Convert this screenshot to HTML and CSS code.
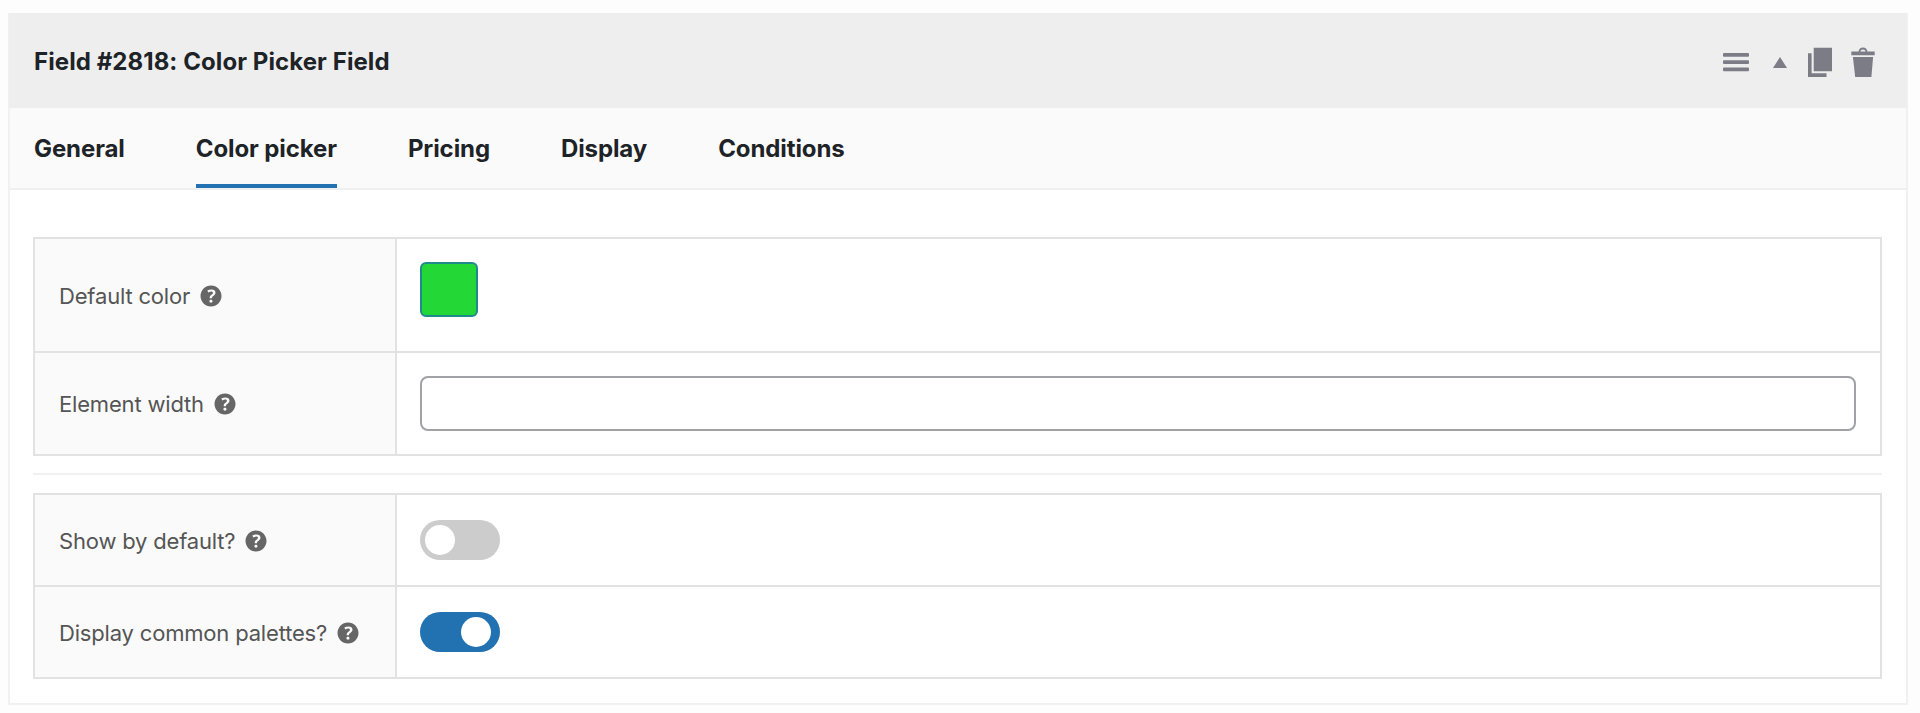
FILE: index.html
```html
<!DOCTYPE html>
<html lang="en">
<head>
    <meta charset="UTF-8">
    <title>Color Picker Field</title>
    <link rel="stylesheet" href="styles.css">
</head>
<body>

<!-- help icon, used next to every label -->
<svg class="symbols">
    <symbol id="help" viewBox="2 2 16 16">
        <path d="M17 10c0-3.870-3.140-7-7-7-3.870 0-7 3.130-7 7s3.130 7 7 7c3.860 0 7-3.130 7-7zM10.700 11.480h-1.560v-0.430c0-0.380 0.080-0.700 0.240-0.980s0.460-0.570 0.880-0.890c0.410-0.290 0.680-0.530 0.810-0.710 0.140-0.180 0.200-0.390 0.200-0.620 0-0.250-0.090-0.440-0.280-0.580-0.190-0.130-0.450-0.190-0.790-0.190-0.580 0-1.250 0.190-2 0.570l-0.640-1.280c0.870-0.490 1.800-0.740 2.770-0.740 0.810 0 1.450 0.200 1.920 0.580 0.480 0.390 0.710 0.910 0.710 1.550 0 0.430-0.090 0.800-0.290 1.110-0.190 0.320-0.570 0.670-1.110 1.060-0.380 0.280-0.610 0.490-0.710 0.630-0.100 0.150-0.150 0.340-0.150 0.570v0.350zM9.230 14.220c-0.180-0.170-0.270-0.420-0.270-0.730 0-0.330 0.080-0.580 0.260-0.750s0.430-0.250 0.770-0.250c0.320 0 0.570 0.090 0.750 0.260s0.270 0.420 0.270 0.740c0 0.300-0.090 0.550-0.270 0.720-0.180 0.180-0.430 0.270-0.750 0.270-0.330 0-0.580-0.090-0.760-0.260z"/>
    </symbol>
</svg>

<div class="field">
    <div class="field-header">
        <h2>Field #2818: Color Picker Field</h2>
        <div class="actions">
            <svg class="icon-menu" width="26" height="30" viewBox="0 0 26 30">
                <rect x="0" y="6" width="26" height="3.800" rx="1"/>
                <rect x="0" y="13.200" width="26" height="3.800" rx="1"/>
                <rect x="0" y="20.500" width="26" height="3.800" rx="1"/>
            </svg>
            <svg class="icon-toggle" width="14" height="30" viewBox="0 0 14 30">
                <path d="M7 10L14 21H0z"/>
            </svg>
            <svg class="icon-copy" width="24" height="30" viewBox="0 0 24 30">
                <path d="M5.700 0.800H24V24.300H5.700zM0 6.300H3.600V26.200H18.500V30H0z"/>
            </svg>
            <svg class="icon-trash" width="24" height="30" viewBox="0 0 24 30">
                <path d="M0.300 4.600h7.200C8 2 9.600 0.600 12 0.600s4 1.400 4.500 4h7.200V8.300H0.300zM9.300 4.600h5.400C14.300 3.200 13.400 2.500 12 2.500s-2.300 0.700-2.700 2.100z" fill-rule="evenodd"/>
                <path d="M1.900 10h20.200L20.400 30H4.200z"/>
            </svg>
        </div>
    </div>

    <div class="tabs">
        <a class="tab">General</a>
        <a class="tab active">Color picker</a>
        <a class="tab">Pricing</a>
        <a class="tab">Display</a>
        <a class="tab">Conditions</a>
    </div>

    <div class="content">
        <div class="table">
            <div class="row row-color">
                <div class="label">Default color <svg class="help"><use href="#help"/></svg></div>
                <div class="value"><div class="swatch"></div></div>
            </div>
            <div class="row row-width">
                <div class="label">Element width <svg class="help"><use href="#help"/></svg></div>
                <div class="value"><input type="text" class="text-input"></div>
            </div>
        </div>

        <hr class="separator">

        <div class="table">
            <div class="row row-switch">
                <div class="label">Show by default? <svg class="help"><use href="#help"/></svg></div>
                <div class="value"><div class="switch"><span class="knob"></span></div></div>
            </div>
            <div class="row row-switch">
                <div class="label">Display common palettes? <svg class="help"><use href="#help"/></svg></div>
                <div class="value"><div class="switch on"><span class="knob"></span></div></div>
            </div>
        </div>
    </div>
</div>

</body>
</html>
```
FILE: styles.css
```css
* {
    box-sizing: border-box;
}
body {
    margin: 0;
    padding: 13px 12px 8px 8px;
    background-color: #fdfdfd;
    font-family: Inter, "Liberation Sans", sans-serif;
    color: #1d2327;
}
.symbols {
    display: none;
}
.field {
    height: 692px;
    border: 2px solid #f1f1f1;
    border-top: none;
    background-color: #fff;
}
.field-header {
    display: flex;
    align-items: center;
    justify-content: space-between;
    height: 95px;
    margin: 0 -1px;
    padding: 0 32px 0 25px;
    background-color: #eee;
}
h2 {
    margin: 0;
    padding-top: 2px;
    font-size: 24px;
    font-weight: 700;
    line-height: 30px;
    letter-spacing: 0.08px;
}
.actions {
    display: flex;
    align-items: center;
    padding-top: 3px;
    fill: #7b7c86;
}
.icon-toggle {
    margin: 0 21px 0 24px;
}
.icon-copy {
    margin-right: 19px;
}
.tabs {
    display: flex;
    gap: 71px;
    height: 82px;
    padding-left: 24px;
    border-bottom: 2px solid #f0f0f0;
    background-color: #fafafa;
}
.tab {
    padding-top: 26px;
    font-size: 24px;
    font-weight: 700;
    line-height: 30px;
    letter-spacing: -0.1px;
}
.active {
    border-bottom: 4px solid #2271b1;
}
.content {
    padding: 47px 24px 0 23px;
}
.table {
    border: 2px solid #e2e2e2;
}
.row {
    display: flex;
}
.row + .row {
    border-top: 2px solid #e2e2e2;
}
.label {
    display: flex;
    align-items: center;
    width: 362px;
    padding: 1px 0 0 24px;
    border-right: 2px solid #e2e2e2;
    background-color: #fafafa;
    color: #555;
    font-size: 22px;
    letter-spacing: -0.18px;
}
.help {
    width: 24px;
    height: 24px;
    margin-left: 9px;
    fill: #666;
}
.value {
    flex: 1;
    padding: 23px 24px 0 23px;
}
.row-color {
    height: 112px;
}
.row-width {
    height: 103px;
}
.row-switch {
    height: 90px;
}
.row-switch + .row-switch {
    height: 92px;
}
.row-switch .value {
    padding-top: 25px;
}
.swatch {
    width: 58px;
    height: 55px;
    border: 2px solid #1f8a8c;
    border-radius: 6px;
    background-color: #23d836;
}
.text-input {
    display: block;
    width: 100%;
    height: 55px;
    border: 2px solid #a0a2a5;
    border-radius: 8px;
    background-color: #fff;
}
.separator {
    height: 2px;
    margin: 17px 0 18px;
    border: none;
    background-color: #f1f1f1;
}
.switch {
    display: flex;
    align-items: center;
    width: 80px;
    height: 40px;
    padding: 0 5px;
    border-radius: 20px;
    background-color: #ccc;
}
.on {
    justify-content: flex-end;
    padding-right: 9px;
    background-color: #2271b1;
}
.knob {
    width: 30px;
    height: 30px;
    border-radius: 50%;
    background-color: #fff;
}
```
